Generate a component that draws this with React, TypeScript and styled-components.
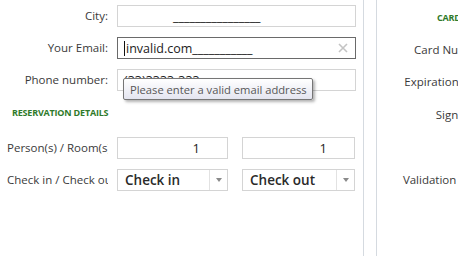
import React from 'react';
import styled, { createGlobalStyle } from 'styled-components';

const GlobalStyle = createGlobalStyle`
  html, body {
    margin: 0;
    padding: 0;
    background: #ffffff;
    overflow: hidden;
  }
  body {
    font-family: "Open Sans", "Noto Sans", sans-serif;
    color: #333333;
  }
`;

const Page = styled.div`
  display: flex;
  width: 560px;
  height: 256px;
`;

const LeftPanel = styled.div`
  width: 364px;
  flex-shrink: 0;
  box-sizing: border-box;
  padding-top: 5px;
  border-right: 1px solid #d5dae0;
  display: flex;
  flex-direction: column;
  gap: 10px;
`;

const RightPanel = styled.div`
  margin-left: 12px;
  flex: 1;
  border-left: 1px solid #d5dae0;
  display: flex;
  flex-direction: column;
`;

const Row = styled.div`
  position: relative;
  display: grid;
  grid-template-columns: 101px 1fr;
  column-gap: 9px;
  align-items: center;
  padding-left: 7px;
  width: 356px;
  box-sizing: border-box;
`;

const Label = styled.div<{ $align?: 'left' | 'right' }>`
  font-size: 11.5px;
  color: #3a3a3a;
  white-space: nowrap;
  overflow: hidden;
  text-align: ${(p) => p.$align ?? 'right'};
  line-height: 22px;
`;

const Pair = styled.div`
  display: grid;
  grid-template-columns: 111px 113px;
  column-gap: 14px;
`;

const Field = styled.div<{ $focused?: boolean }>`
  height: 22px;
  box-sizing: border-box;
  border: 1px solid ${(p) => (p.$focused ? '#6a6a6a' : '#d4d4d4')};
  background: #ffffff;
  display: flex;
  align-items: center;
  font-size: 12.5px;
  color: #222222;
  padding: 0 6px;
  position: relative;
  white-space: nowrap;
  overflow: hidden;
`;

const Mask = styled.span<{ $offset?: number }>`
  color: #111111;
  margin-left: ${(p) => p.$offset ?? 0}px;
`;

const Caret = styled.span`
  display: inline-block;
  width: 1px;
  height: 15px;
  background: #111111;
  margin-right: 1px;
`;

const ClearButton = styled.span`
  position: absolute;
  right: 7px;
  top: 5px;
  display: flex;
`;

const NumberField = styled(Field)`
  justify-content: flex-end;
  padding-right: 27px;
  font-size: 13px;
`;

const Select = styled.div`
  height: 22px;
  box-sizing: border-box;
  border: 1px solid #d4d4d4;
  display: flex;
  align-items: stretch;
`;

const SelectValue = styled.div`
  flex: 1;
  display: flex;
  align-items: center;
  padding-left: 7px;
  font-size: 13.5px;
  font-weight: 600;
  color: #2a2a2a;
`;

const SelectArrow = styled.div`
  width: 17px;
  border-left: 1px solid #e2e2e2;
  display: flex;
  align-items: center;
  justify-content: center;
  &::after {
    content: '';
    border-left: 3px solid transparent;
    border-right: 3px solid transparent;
    border-top: 4px solid #8a8a8a;
  }
`;

const SectionTitle = styled.div<{ $indent: number }>`
  font-size: 9px;
  font-weight: 700;
  color: #2f7a2a;
  letter-spacing: -0.2px;
  line-height: 14px;
  padding: 5px 0 7px ${(p) => p.$indent}px;
  white-space: nowrap;
`;

const Tooltip = styled.div`
  position: absolute;
  left: 123px;
  top: 9px;
  height: 22px;
  box-sizing: border-box;
  padding: 0 5px 0 6px;
  display: flex;
  align-items: center;
  border: 1px solid #767676;
  border-radius: 2px;
  background: linear-gradient(#ffffff, #e4e5f0);
  box-shadow: 2px 2px 3px rgba(0, 0, 0, 0.3);
  font-size: 11.2px;
  color: #575757;
  white-space: nowrap;
  z-index: 2;
`;

const CardRow = styled.div<{ $height: number }>`
  height: ${(p) => p.$height}px;
  display: flex;
  align-items: flex-start;
`;

const CardLabel = styled.div`
  width: 113px;
  text-align: right;
  font-size: 11.5px;
  line-height: 22px;
  color: #3a3a3a;
  white-space: nowrap;
`;

const CloseIcon = () => (
  <svg width="10" height="10" viewBox="0 0 10 10">
    <path d="M1 1L9 9M9 1L1 9" stroke="#c4c4c4" strokeWidth="1.6" />
  </svg>
);

export default function App() {
  return (
    <>
      <GlobalStyle />
      <Page>
        <LeftPanel>
          <Row>
            <Label>City:</Label>
            <Field>
              <Mask $offset={49}>________________</Mask>
            </Field>
          </Row>
          <Row>
            <Label>Your Email:</Label>
            <Field $focused>
              <Caret />
              invalid.com<Mask>___________</Mask>
              <ClearButton>
                <CloseIcon />
              </ClearButton>
            </Field>
          </Row>
          <Row>
            <Label>Phone number:</Label>
            <Field>(33)3333-333</Field>
            <Tooltip>Please enter a valid email address</Tooltip>
          </Row>
          <SectionTitle $indent={12}>RESERVATION DETAILS</SectionTitle>
          <Row>
            <Label $align="left">Person(s) / Room(s)</Label>
            <Pair>
              <NumberField>1</NumberField>
              <NumberField>1</NumberField>
            </Pair>
          </Row>
          <Row>
            <Label $align="left">Check in / Check out</Label>
            <Pair>
              <Select>
                <SelectValue>Check in</SelectValue>
                <SelectArrow />
              </Select>
              <Select>
                <SelectValue>Check out</SelectValue>
                <SelectArrow />
              </Select>
            </Pair>
          </Row>
        </LeftPanel>
        <RightPanel>
          <SectionTitle $indent={60} style={{ paddingTop: 11, paddingBottom: 0 }}>
            CARD DETAILS
          </SectionTitle>
          <CardRow $height={32} style={{ marginTop: 14 }}>
            <CardLabel>Card Number:</CardLabel>
          </CardRow>
          <CardRow $height={33}>
            <CardLabel>Expiration Date:</CardLabel>
          </CardRow>
          <CardRow $height={65}>
            <CardLabel>Signature:</CardLabel>
          </CardRow>
          <CardRow $height={32}>
            <CardLabel>Validation Code:</CardLabel>
          </CardRow>
        </RightPanel>
      </Page>
    </>
  );
}
